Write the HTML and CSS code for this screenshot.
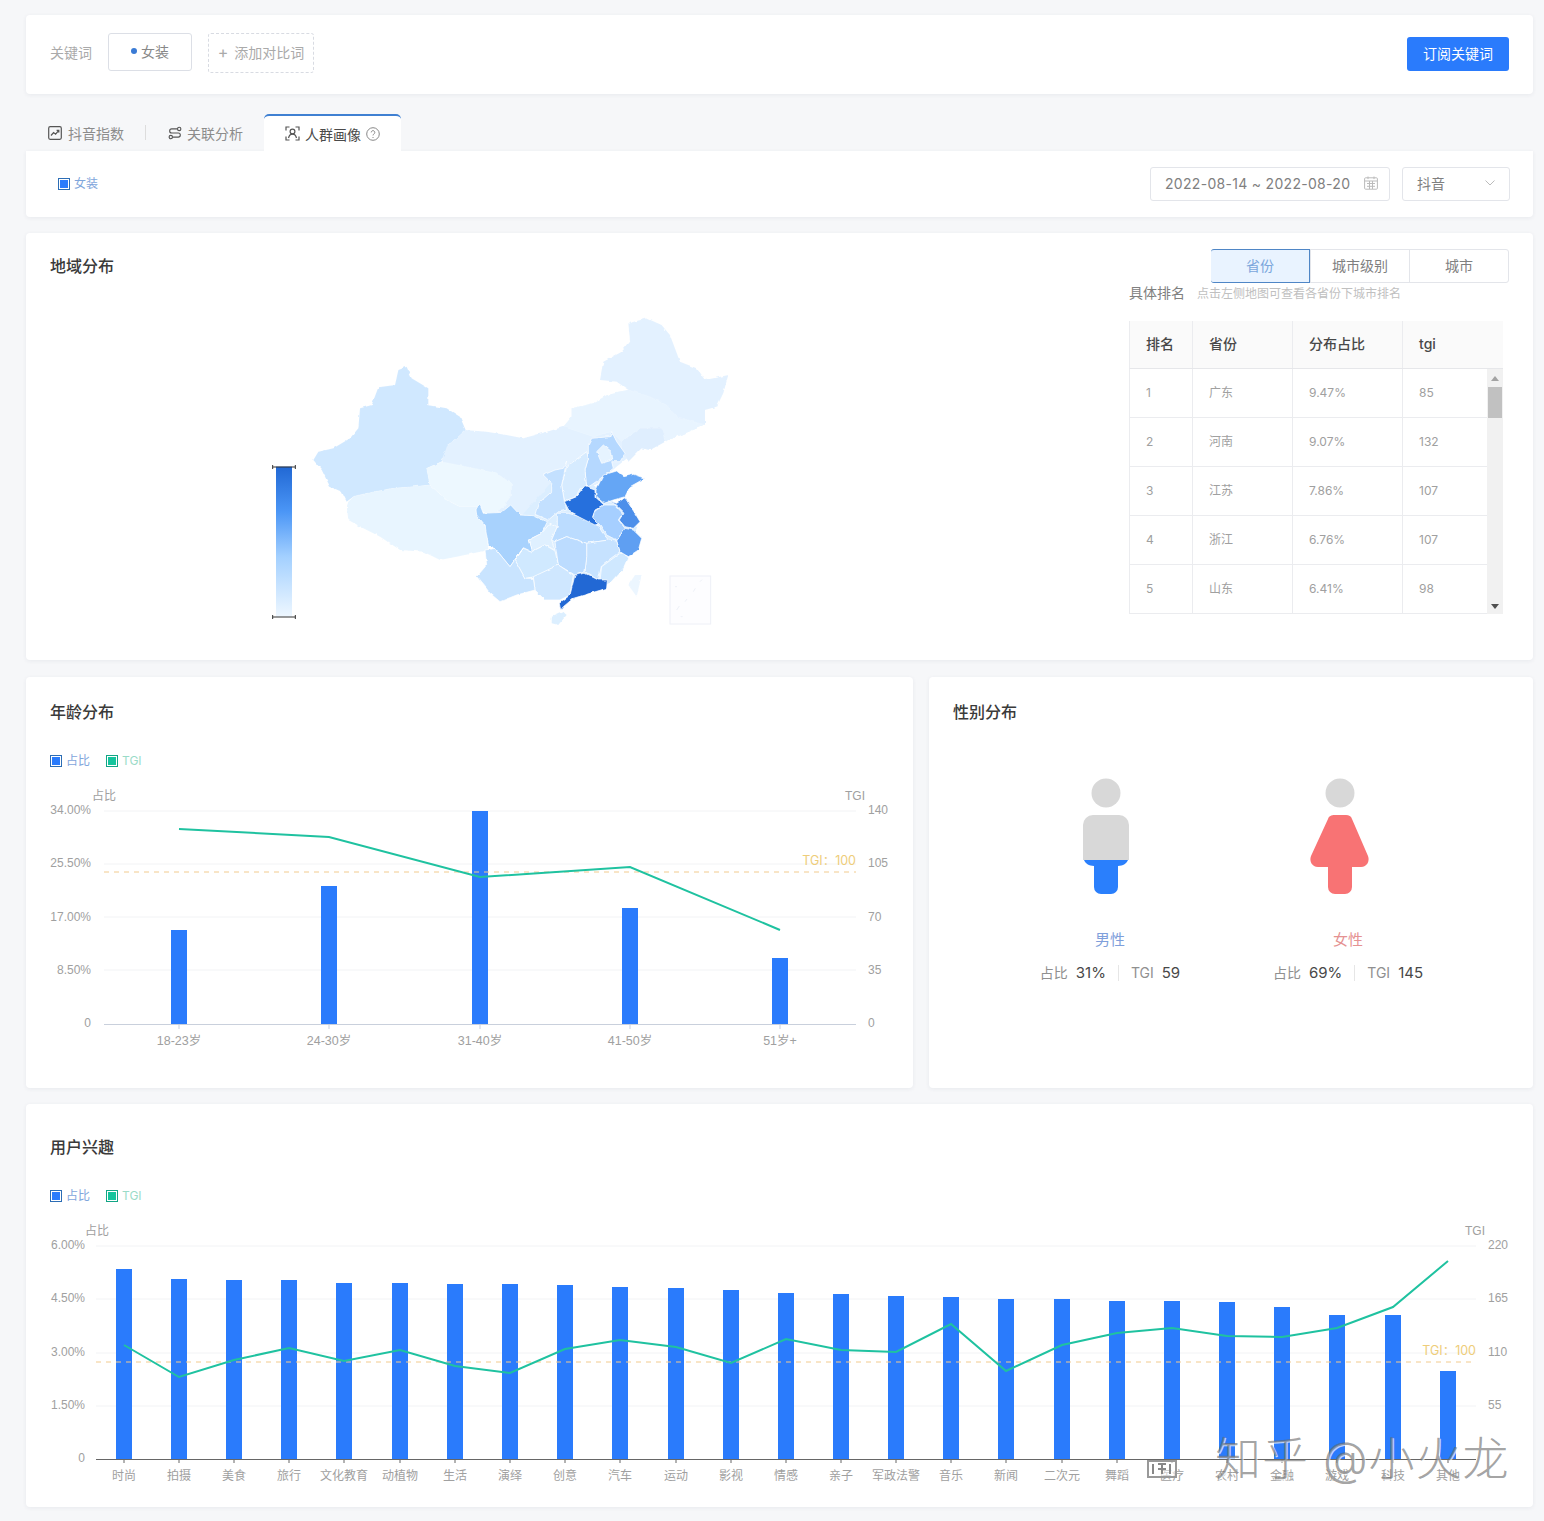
FILE: index.html
```html
<!DOCTYPE html>
<html lang="zh-CN">
<head>
  <meta charset="UTF-8">
  <title>人群画像</title>
  <link rel="stylesheet" href="styles.css">
</head>
<body>
  <!-- 关键词 -->
  <section class="card keyword-bar">
    <span class="keyword-label">关键词</span>
    <span class="keyword-chip"><i class="dot"></i>女装</span>
    <span class="keyword-add"><b>+</b>添加对比词</span>
    <button class="subscribe">订阅关键词</button>
  </section>

  <!-- 标签页 -->
  <nav class="tabs">
    <a class="tab tab-first">
      <svg width="14" height="14" viewBox="0 0 14 14" class="tab-icon"><rect x="0.7" y="0.7" width="12.6" height="12.6" rx="1.5"/><path d="M3 9.5l2.6-3 2 1.6L10.6 4.6M8.6 4.4h2.2v2.2"/></svg>
      抖音指数
    </a>
    <i class="tab-sep"></i>
    <a class="tab">
      <svg width="14" height="14" viewBox="0 0 15 14" class="tab-icon"><circle cx="12" cy="2.6" r="1.8"/><circle cx="3" cy="11.4" r="1.8"/><path d="M10.2 2.6H4a2.2 2.2 0 0 0 0 4.4h7a2.2 2.2 0 0 1 0 4.4H4.8"/></svg>
      关联分析
    </a>
    <a class="tab tab-active">
      <svg width="15" height="15" viewBox="0 0 15 15" class="tab-icon"><path d="M1 4.5V1h3.5M10.5 1H14v3.5M14 10.5V14h-3.5M4.500 14H1v-3.500"/><circle cx="7.500" cy="5.500" r="2.400"/><path d="M3.500 12c.6-2.500 2.200-3.800 4-3.800s3.400 1.300 4 3.800"/></svg>
      人群画像
      <svg width="14" height="14" viewBox="0 0 14 14" class="help"><circle cx="7" cy="7" r="6.300"/><path d="M5.200 5.400a1.800 1.800 0 1 1 2.700 1.600c-.6.400-.9.700-.9 1.400"/><path d="M7 10v1"/></svg>
    </a>
  </nav>

  <!-- 筛选 -->
  <section class="card filter-bar">
    <span class="legend-item legend-blue"><i class="legend-box"></i>女装</span>
    <span class="date-input">
      2022-08-14 ~ 2022-08-20
      <svg width="14" height="14" viewBox="0 0 14 14" class="input-icon"><rect x="0.600" y="1.800" width="12.800" height="11.400" rx="1"/><path d="M0.600 5h12.800M4 .5v2.600M10 .5v2.600M3 7.500h8M3 10.300h8M5.500 5v8M8.500 5v8"/></svg>
    </span>
    <span class="select-input">
      抖音
      <svg width="12" height="8" viewBox="0 0 12 8" class="input-icon"><path d="M1.500 1.500L6 6l4.500-4.500"/></svg>
    </span>
  </section>

  <!-- 地域分布 -->
  <section class="card region-card">
    <div class="region-left">
      <h2 class="card-title">地域分布</h2>
      <svg class="china-map" width="480" height="320" viewBox="0 0 1440 960">
        <defs>
          <linearGradient id="rangeFill" x1="0" y1="0" x2="0" y2="1">
            <stop offset="0" stop-color="#2168d4"/>
            <stop offset="0.3" stop-color="#4b96f6"/>
            <stop offset="0.6" stop-color="#a3d0ff"/>
            <stop offset="1" stop-color="#eef7ff"/>
          </linearGradient>
          <filter id="rough" filterUnits="userSpaceOnUse" x="100" y="0" width="1340" height="960">
            <feTurbulence type="fractalNoise" baseFrequency="0.05" numOctaves="2" seed="4"/>
            <feDisplacementMap in="SourceGraphic" scale="9" xChannelSelector="R" yChannelSelector="G"/>
          </filter>
        </defs>
        <rect x="48" y="470" width="48" height="450" fill="url(#rangeFill)"/>
        <path class="range-handle" d="M38 471H106M38 465v12M106 465v12M38 921H106M38 915v12M106 915v12"/>
        <g filter="url(#rough)">
          <!-- 西部、北部 -->
          <g class="pale" transform="translate(120 0)">
            <polygon fill="#e3f1ff" points="497,360 560,365 620,375 670,385 740,365 790,350 815,320 815,295 880,280 930,250 985,240 950,215 900,210 910,155 965,125 990,95 985,40 1040,25 1085,45 1110,75 1140,155 1190,175 1215,210 1285,195 1270,250 1250,290 1215,300 1215,345 1095,395 1050,420 1025,415 975,450 950,470 870,540 700,620 560,600 440,480 425,440 445,400 470,385"/>
            <polygon fill="#e8f4ff" points="815,295 880,280 930,250 985,240 1050,260 1100,285 1130,320 1215,345 1095,395 1085,355 1020,355 965,395 935,365 880,380 790,350 815,320"/>
            <polygon fill="#dfeefe" points="965,395 1020,355 1085,355 1095,395 1050,420 1025,415 985,455 965,420"/>
            <polygon fill="#d0e8ff" points="40,450 55,425 100,415 150,385 175,355 180,295 215,285 235,232 285,225 295,180 320,170 335,205 385,235 385,285 440,295 480,320 497,360 470,385 445,400 425,455 380,475 390,525 340,530 280,535 225,545 160,560 140,575 125,545 90,530 65,480"/>
          </g>
          <g class="pale">
            <polygon fill="#e8f5ff" points="260,590 265,575 280,560 345,545 400,535 460,530 510,525 560,570 600,590 650,590 680,660 685,720 640,730 590,740 540,750 490,725 420,720 360,680 310,655 265,630"/>
            <polygon fill="#edf8ff" points="500,475 545,455 620,470 710,490 755,520 755,555 730,590 690,620 650,590 600,590 560,570 510,525"/>
            <polygon fill="#ecf6ff" points="1125,795 1145,795 1130,860 1105,825"/>
            <polygon fill="#dcefff" points="875,920 910,905 920,915 895,945 875,940"/>
          </g>
          <!-- 中部、东部 -->
          <g class="province" transform="translate(630 345)">
            <polygon class="map-fill" points="130,300 290,120 400,200 500,300 470,400 400,480 300,510 190,455 100,420"/>
            <polygon fill="#b5d8ff" points="355,60 365,40 420,35 425,20 440,50 465,85 450,110 425,110 430,130 385,165 350,190 345,135 355,100"/>
            <polygon fill="#e6f3ff" points="380,80 400,60 425,80 428,105 395,115"/>
            <polygon fill="#d6ebff" points="290,125 350,80 355,100 345,135 350,190 330,190 320,215 283,228 275,180"/>
            <polygon fill="#c3e0ff" points="290,108 280,130 255,135 220,150 245,175 245,200 205,235 195,268 235,285 262,262 290,255 283,228 275,180"/>
            <polygon fill="#a8d2fd" points="18,250 30,240 40,265 95,262 122,240 150,270 190,272 232,290 215,325 175,345 185,380 160,368 120,425 75,370 55,360 45,300 20,270"/>
            <polygon fill="#dff0ff" points="175,345 215,325 240,295 262,305 245,345 255,375 225,360 185,380"/>
            <polygon fill="#bbdcff" points="245,345 262,305 262,265 295,265 330,275 385,300 395,320 415,345 350,355 290,335 255,350"/>
            <polygon fill="#2770dd" points="283,230 320,215 345,185 375,195 375,215 402,240 375,255 368,275 390,292 375,300 345,285 300,262"/>
            <polygon fill="#65a6f5" points="378,195 400,150 440,138 462,155 490,148 525,160 480,185 465,215 430,225 402,235 378,215"/>
            <polygon fill="#4d8fea" points="415,228 440,235 465,218 495,265 510,290 490,310 465,305 448,285 462,262 440,240"/>
            <polygon fill="#a6cfff" points="375,258 402,240 435,240 458,265 445,285 465,310 440,345 410,330 390,300 368,278"/>
            <polygon fill="#5e9ff2" points="465,310 490,315 515,340 505,375 475,395 450,380 440,348"/>
            <polygon fill="#c6e2ff" points="350,355 415,345 440,348 450,380 395,420 385,465 345,440 350,395"/>
            <polygon fill="#cfe8ff" points="395,425 450,385 475,395 460,430 415,480 390,465"/>
            <polygon fill="#bcdcff" points="255,350 290,335 350,355 350,395 345,440 315,450 265,420"/>
            <polygon fill="#d0e9ff" points="135,405 160,370 185,380 225,360 255,378 265,420 195,455 165,460"/>
            <polygon fill="#cfe7ff" points="190,455 265,420 310,450 300,510 270,525 225,525 195,495"/>
            <polygon fill="#c9e4ff" points="20,455 50,420 45,375 75,370 120,425 160,370 135,405 165,460 190,460 195,495 140,510 90,530 60,505 45,485"/>
            <polygon fill="#2168d4" points="315,450 345,445 385,465 412,465 410,490 360,505 310,520 280,545 272,555 268,535 300,510"/>
          </g>
        </g>
        <rect class="island-box" x="1230" y="798" width="122" height="144"/>
        <path class="island-dots" d="M1250 900l8-12M1275 875l6-8M1300 845l6-10M1320 815l6-6M1245 830h6M1262 920h6"/>
      </svg>
    </div>
    <div class="region-right">
      <div class="segment">
        <span class="segment-item segment-active">省份</span>
        <span class="segment-item">城市级别</span>
        <span class="segment-item">城市</span>
      </div>
      <div class="rank-title">具体排名<small>点击左侧地图可查看各省份下城市排名</small></div>
      <div class="rank-table">
        <div class="rank-row rank-head"><span>排名</span><span>省份</span><span>分布占比</span><span>tgi</span></div>
        <div class="rank-scroll">
          <div class="rank-rows">
            <div class="rank-row"><span>1</span><span>广东</span><span>9.47%</span><span>85</span></div>
            <div class="rank-row"><span>2</span><span>河南</span><span>9.07%</span><span>132</span></div>
            <div class="rank-row"><span>3</span><span>江苏</span><span>7.86%</span><span>107</span></div>
            <div class="rank-row"><span>4</span><span>浙江</span><span>6.76%</span><span>107</span></div>
            <div class="rank-row"><span>5</span><span>山东</span><span>6.41%</span><span>98</span></div>
          </div>
          <div class="scrollbar">
            <i class="arrow-up"></i>
            <i class="thumb"></i>
            <i class="arrow-down"></i>
          </div>
        </div>
      </div>
    </div>
  </section>

  <div class="chart-row">
    <!-- 年龄分布 -->
    <section class="card age-card">
      <h2 class="card-title">年龄分布</h2>
      <div class="legend">
        <span class="legend-item legend-blue"><i class="legend-box"></i>占比</span>
        <span class="legend-item legend-green"><i class="legend-box"></i>TGI</span>
      </div>
      <svg class="chart" width="887" height="290" viewBox="26 780 887 290">
        <g class="grid">
          <path d="M104 811H856M104 864H856M104 917H856M104 970H856"/>
        </g>
        <path class="axis-light" d="M104 1024.500H856M179 1024v5M329 1024v5M480 1024v5M630 1024v5M780 1024v5"/>
        <text class="tick" x="92" y="800">占比</text>
        <text class="tick end" x="865" y="800">TGI</text>
        <text class="tick end" x="91" y="814">34.00%</text>
        <text class="tick end" x="91" y="867">25.50%</text>
        <text class="tick end" x="91" y="921">17.00%</text>
        <text class="tick end" x="91" y="974">8.50%</text>
        <text class="tick end" x="91" y="1027">0</text>
        <text class="tick" x="868" y="814">140</text>
        <text class="tick" x="868" y="867">105</text>
        <text class="tick" x="868" y="921">70</text>
        <text class="tick" x="868" y="974">35</text>
        <text class="tick" x="868" y="1027">0</text>
        <g class="bars">
          <rect x="171" y="930" width="16" height="94"/>
          <rect x="321" y="886" width="16" height="138"/>
          <rect x="472" y="811" width="16" height="213"/>
          <rect x="622" y="908" width="16" height="116"/>
          <rect x="772" y="958" width="16" height="66"/>
        </g>
        <path class="tgi-dash" d="M104 872H856"/>
        <text class="tgi-label" x="856" y="865">TGI：100</text>
        <polyline class="tgi-line" points="179,829 329,837 480,877 630,867 780,930"/>
        <g class="tick tick-wide middle">
          <text x="179" y="1045">18-23岁</text>
          <text x="329" y="1045">24-30岁</text>
          <text x="480" y="1045">31-40岁</text>
          <text x="630" y="1045">41-50岁</text>
          <text x="780" y="1045">51岁+</text>
        </g>
      </svg>
    </section>

    <!-- 性别分布 -->
    <section class="card gender-card">
      <h2 class="card-title">性别分布</h2>
      <div class="gender-cols">
        <div class="gender-col">
          <svg width="72" height="125" viewBox="1074 775 72 125">
            <circle cx="1106" cy="793" r="14.500" fill="#d8d8d8"/>
            <path fill="#d8d8d8" d="M1083 825a10 10 0 0 1 10-10h26a10 10 0 0 1 10 10v35h-46z"/>
            <path fill="#2a7ffc" d="M1084 860h44c-1 3-5 6-10 6v21a7 7 0 0 1-7 7h-10a7 7 0 0 1-7-7v-21c-5 0-9-3-10-6z"/>
          </svg>
          <div class="gender-name name-male">男性</div>
          <div class="gender-stats"><span>占比</span><b>31%</b><i></i><span>TGI</span><b>59</b></div>
        </div>
        <div class="gender-col">
          <svg width="96" height="125" viewBox="1300 775 96 125">
            <circle cx="1340" cy="793" r="14.500" fill="#d8d8d8"/>
            <path fill="#f87374" d="M1335 815h11c3 0 5 1 6 4l16 37c2 5-1 11-7 11h-9v20a7 7 0 0 1-7 7h-10a7 7 0 0 1-7-7v-20h-10c-6 0-9-6-7-11l17-37c1-3 3-4 7-4z"/>
          </svg>
          <div class="gender-name name-female">女性</div>
          <div class="gender-stats"><span>占比</span><b>69%</b><i></i><span>TGI</span><b>145</b></div>
        </div>
      </div>
    </section>
  </div>

  <!-- 用户兴趣 -->
  <section class="card interest-card">
    <h2 class="card-title">用户兴趣</h2>
    <div class="legend">
      <span class="legend-item legend-blue"><i class="legend-box"></i>占比</span>
      <span class="legend-item legend-green"><i class="legend-box"></i>TGI</span>
    </div>
    <svg class="chart" width="1507" height="292" viewBox="26 1215 1507 292">
      <g class="grid">
        <path d="M96 1246H1476M96 1299H1476M96 1353H1476M96 1406H1476"/>
      </g>
      <text class="tick" x="85" y="1235">占比</text>
      <text class="tick end" x="1485" y="1235">TGI</text>
      <text class="tick end" x="85" y="1249">6.00%</text>
      <text class="tick end" x="85" y="1302">4.50%</text>
      <text class="tick end" x="85" y="1356">3.00%</text>
      <text class="tick end" x="85" y="1409">1.50%</text>
      <text class="tick end" x="85" y="1462">0</text>
      <text class="tick" x="1488" y="1249">220</text>
      <text class="tick" x="1488" y="1302">165</text>
      <text class="tick" x="1488" y="1356">110</text>
      <text class="tick" x="1488" y="1409">55</text>
      <g class="bars">
        <rect x="116" y="1269" width="16" height="190"/>
        <rect x="171" y="1279" width="16" height="180"/>
        <rect x="226" y="1280" width="16" height="179"/>
        <rect x="281" y="1280" width="16" height="179"/>
        <rect x="336" y="1283" width="16" height="176"/>
        <rect x="392" y="1283" width="16" height="176"/>
        <rect x="447" y="1284" width="16" height="175"/>
        <rect x="502" y="1284" width="16" height="175"/>
        <rect x="557" y="1285" width="16" height="174"/>
        <rect x="612" y="1287" width="16" height="172"/>
        <rect x="668" y="1288" width="16" height="171"/>
        <rect x="723" y="1290" width="16" height="169"/>
        <rect x="778" y="1293" width="16" height="166"/>
        <rect x="833" y="1294" width="16" height="165"/>
        <rect x="888" y="1296" width="16" height="163"/>
        <rect x="943" y="1297" width="16" height="162"/>
        <rect x="998" y="1299" width="16" height="160"/>
        <rect x="1054" y="1299" width="16" height="160"/>
        <rect x="1109" y="1301" width="16" height="158"/>
        <rect x="1164" y="1301" width="16" height="158"/>
        <rect x="1219" y="1302" width="16" height="157"/>
        <rect x="1274" y="1307" width="16" height="152"/>
        <rect x="1329" y="1315" width="16" height="144"/>
        <rect x="1385" y="1315" width="16" height="144"/>
        <rect x="1440" y="1371" width="16" height="88"/>
      </g>
      <path class="axis-dark" d="M96 1459.500H1476M124 1459v4M179 1459v4M234 1459v4M289 1459v4M344 1459v4M400 1459v4M455 1459v4M510 1459v4M565 1459v4M620 1459v4M676 1459v4M731 1459v4M786 1459v4M841 1459v4M896 1459v4M951 1459v4M1006 1459v4M1062 1459v4M1117 1459v4M1172 1459v4M1227 1459v4M1282 1459v4M1337 1459v4M1393 1459v4M1448 1459v4"/>
      <path class="tgi-dash" d="M96 1362H1476"/>
      <text class="tgi-label" x="1476" y="1355">TGI：100</text>
      <polyline class="tgi-line" points="124,1345 179,1377 234,1360 289,1348 344,1361 400,1350 455,1366 510,1373 565,1349 620,1340 676,1347 731,1363 786,1339 841,1350 896,1352 951,1324 1006,1371 1062,1345 1117,1333 1172,1328 1227,1336 1282,1337 1337,1328 1393,1307 1448,1261"/>
      <g class="tick middle">
        <text x="124" y="1480">时尚</text>
        <text x="179" y="1480">拍摄</text>
        <text x="234" y="1480">美食</text>
        <text x="289" y="1480">旅行</text>
        <text x="344" y="1480">文化教育</text>
        <text x="400" y="1480">动植物</text>
        <text x="455" y="1480">生活</text>
        <text x="510" y="1480">演绎</text>
        <text x="565" y="1480">创意</text>
        <text x="620" y="1480">汽车</text>
        <text x="676" y="1480">运动</text>
        <text x="731" y="1480">影视</text>
        <text x="786" y="1480">情感</text>
        <text x="841" y="1480">亲子</text>
        <text x="896" y="1480">军政法警</text>
        <text x="951" y="1480">音乐</text>
        <text x="1006" y="1480">新闻</text>
        <text x="1062" y="1480">二次元</text>
        <text x="1117" y="1480">舞蹈</text>
        <text x="1172" y="1480">医疗</text>
        <text x="1227" y="1480">农村</text>
        <text x="1282" y="1480">金融</text>
        <text x="1337" y="1480">游戏</text>
        <text x="1393" y="1480">科技</text>
        <text x="1448" y="1480">其他</text>
      </g>
    </svg>
    <!-- 水印 -->
    <svg class="wm-badge" width="30" height="18" viewBox="0 0 30 18"><rect x="1" y="1" width="28" height="16" fill="#fff" fill-opacity="0.5" stroke="#999" stroke-width="2"/><path d="M6 4v10M11 4h8M11 9h8M15 4v10M23 4v10" stroke="#888" stroke-width="2" fill="none"/></svg>
    <span class="watermark">知乎 @小火龙</span>
  </section>
</body>
</html>
```

FILE: styles.css
```css
/* 全局 */
body {
  margin: 0;
  padding: 15px 11px 14px 26px;
  background-color: #f6f7f9;
  font-family: Inter, "Noto Sans CJK SC", sans-serif;
  font-size: 14px;
  color: #666;
}
i {
  font-style: normal;
}
.card {
  background-color: #fff;
  border-radius: 4px;
  box-shadow: 0 1px 4px rgba(40, 60, 90, 0.07);
  box-sizing: border-box;
}
.card-title {
  margin: 0;
  font-size: 16px;
  line-height: 22px;
  font-weight: 500;
  color: #3a3a3a;
}

/* 关键词 */
.keyword-bar {
  display: flex;
  align-items: flex-start;
  height: 79px;
  padding: 18px 24px 0;
}
.keyword-label {
  width: 58px;
  line-height: 40px;
  color: #aaa;
}
.keyword-chip {
  display: flex;
  align-items: center;
  justify-content: center;
  width: 84px;
  height: 38px;
  padding-bottom: 2px;
  box-sizing: border-box;
  border: 1px solid #dcdfe6;
  border-radius: 3px;
  color: #888;
}
.dot {
  width: 6px;
  height: 6px;
  margin-right: 4px;
  border-radius: 50%;
  background-color: #3a7bd5;
}
.keyword-add {
  display: flex;
  align-items: center;
  justify-content: center;
  width: 106px;
  height: 40px;
  margin-left: 16px;
  padding-bottom: 2px;
  box-sizing: border-box;
  border: 1px dashed #d8dbe2;
  border-radius: 3px;
  color: #aaa;
}
.keyword-add b {
  margin-right: 6px;
  font-weight: 400;
  font-size: 16px;
}
.subscribe {
  width: 102px;
  height: 34px;
  margin: 4px 0 0 auto;
  padding: 0 0 2px;
  border: 0;
  border-radius: 3px;
  background-color: #2a7bfc;
  color: #fff;
  font-family: inherit;
  font-size: 14px;
}

/* 标签页 */
.tabs {
  display: flex;
  align-items: center;
  height: 37px;
  margin-top: 20px;
  padding-left: 22px;
}
.tab {
  display: flex;
  align-items: center;
  gap: 5px;
  color: #8c8c8c;
}
.tab-first {
  gap: 6px;
}
.tab-icon {
  fill: none;
  stroke: #555;
  stroke-width: 1.2;
}
.tab-sep {
  width: 1px;
  height: 15px;
  margin: 0 22px 0 21px;
  background-color: #ddd;
}
.tab-active {
  box-sizing: border-box;
  width: 137px;
  height: 37px;
  margin-left: 21px;
  padding-left: 21px;
  border-top: 2px solid #3f80d2;
  border-radius: 5px 5px 0 0;
  background-color: #fff;
  color: #4a4a4a;
}
.help {
  fill: none;
  stroke: #888;
  stroke-width: 1;
}

/* 筛选 */
.filter-bar {
  display: flex;
  align-items: center;
  height: 66px;
  padding: 0 23px 0 32px;
  border-radius: 0 0 4px 4px;
}
.legend-item {
  display: inline-flex;
  align-items: center;
  gap: 4px;
  font-size: 12px;
  line-height: 16px;
}
.legend-box {
  width: 12px;
  height: 12px;
  box-sizing: border-box;
  padding: 1px;
  border: 1px solid;
  background-clip: content-box;
}
.legend-blue {
  color: #7fa6dc;
}
.legend-blue .legend-box {
  border-color: #2c6db5;
  background-color: #2a7bfc;
}
.legend-green {
  color: #9adbc8;
}
.legend-green .legend-box {
  border-color: #12a585;
  background-color: #14c49c;
}
.date-input,
.select-input {
  display: flex;
  align-items: center;
  justify-content: space-between;
  height: 34px;
  padding-bottom: 2px;
  box-sizing: border-box;
  border: 1px solid #e3e5ea;
  border-radius: 3px;
  color: #808080;
}
.date-input {
  width: 240px;
  margin-left: auto;
  padding-left: 14px;
  padding-right: 11px;
  letter-spacing: 0.3px;
  white-space: nowrap;
}
.select-input {
  width: 108px;
  margin-left: 12px;
  padding-left: 14px;
  padding-right: 13px;
}
.input-icon {
  fill: none;
  stroke: #bbb;
  stroke-width: 1;
}

/* 地域分布 */
.region-card {
  display: flex;
  justify-content: space-between;
  height: 427px;
  margin-top: 16px;
  padding: 16px 24px 0;
}
.region-left .card-title {
  margin-top: 6px;
}
.china-map {
  display: block;
  margin: 33px 0 0 210px;
}
.map-fill {
  fill: #dbeeff;
}
.pale polygon {
  stroke: #fff;
  stroke-width: 1;
  stroke-opacity: 0.4;
  stroke-linejoin: round;
}
.province polygon {
  stroke: #fff;
  stroke-width: 2.500;
  stroke-opacity: 0.85;
  stroke-linejoin: round;
}
.province .map-fill {
  stroke-width: 0;
}
.range-handle {
  fill: none;
  stroke: #333;
  stroke-width: 3;
}
.island-box {
  fill: #fdfdff;
  stroke: #eef0f7;
  stroke-width: 3;
}
.island-dots {
  fill: none;
  stroke: #eef1f8;
  stroke-width: 3;
}
.region-right {
  width: 380px;
}
.segment {
  display: flex;
  width: 298px;
  height: 34px;
  margin-left: auto;
  box-sizing: border-box;
  border: 1px solid #e3e5ea;
  border-radius: 3px;
}
.segment-item {
  flex: 1;
  line-height: 31px;
  text-align: center;
  color: #808080;
  border-left: 1px solid #e3e5ea;
}
.segment-item:first-child {
  border-left: 0;
}
.segment-active {
  margin: -1px 0 -1px -1px;
  line-height: 32px;
  border: 1px solid #4f86c6;
  border-radius: 3px 0 0 3px;
  background-color: #e9f3ff;
  color: #7ba6dc;
}
.rank-title {
  line-height: 20px;
  font-size: 14px;
  color: #808080;
}
.rank-title small {
  margin-left: 12px;
  font-size: 12px;
  color: #c0c0c0;
}
.rank-table {
  width: 374px;
  margin-top: 17px;
}
.rank-row {
  display: grid;
  grid-template-columns: 63px 100px 110px 1fr;
  height: 49px;
  box-sizing: border-box;
  border-bottom: 1px solid #ebecef;
  border-left: 1px solid #ebecef;
  font-size: 12px;
  color: #a0a0a0;
}
.rank-row span {
  padding-left: 16px;
  line-height: 48px;
  border-right: 1px solid #ebecef;
}
.rank-row span:last-child {
  border-right: 0;
}
.rank-head {
  height: 48px;
  border-bottom-color: #e6e7ea;
  background-color: #fafafa;
  font-size: 14px;
  font-weight: 500;
  color: #484848;
}
.rank-head span {
  line-height: 45px;
}
.rank-scroll {
  display: flex;
}
.rank-rows {
  flex: 1;
}
.scrollbar {
  display: flex;
  flex-direction: column;
  width: 16px;
  background-color: #f1f1f1;
}
.thumb {
  height: 31px;
  margin: 6px 1px 0;
  background-color: #c1c1c1;
}
.arrow-up,
.arrow-down {
  width: 0;
  height: 0;
  margin: 7px auto 0;
  border-left: 4px solid transparent;
  border-right: 4px solid transparent;
}
.arrow-up {
  border-bottom: 5px solid #a3a3a3;
}
.arrow-down {
  margin: auto auto 5px;
  border-top: 5px solid #505050;
}

/* 图表 */
.chart-row {
  display: grid;
  grid-template-columns: 887px 604px;
  gap: 16px;
  margin-top: 17px;
}
.age-card,
.gender-card {
  height: 411px;
  padding-top: 24px;
}
.card > .card-title {
  padding-left: 24px;
}
.legend {
  display: flex;
  gap: 16px;
  margin: 30px 0 11px 24px;
}
.chart {
  display: block;
}
.grid path {
  fill: none;
  stroke: #f2f3f5;
}
.axis-light {
  fill: none;
  stroke: #c9d0dc;
}
.axis-dark {
  fill: none;
  stroke: #666;
}
.bars rect {
  fill: #2a7bfc;
}
.tick {
  font-family: "Liberation Sans", "Noto Sans CJK SC", sans-serif;
  font-size: 12px;
  fill: #a0a0a0;
}
.tick-wide {
  font-size: 12.500px;
}
.end {
  text-anchor: end;
}
.middle {
  text-anchor: middle;
}
.tgi-dash {
  fill: none;
  stroke: #f2cb8e;
  stroke-dasharray: 5 5;
}
.tgi-label {
  font-size: 12.500px;
  text-anchor: end;
  fill: #eecd7a;
}
.tgi-line {
  fill: none;
  stroke: #1fc2a0;
  stroke-width: 2;
}

/* 性别分布 */
.gender-cols {
  display: flex;
  justify-content: center;
  margin-top: 52px;
  padding-right: 4px;
}
.gender-col {
  display: flex;
  flex-direction: column;
  align-items: center;
  width: 238px;
}
.gender-name {
  margin-top: 29px;
  font-size: 15px;
  line-height: 22px;
}
.name-male {
  color: #7f9fdb;
}
.name-female {
  color: #e59292;
}
.gender-stats {
  display: flex;
  align-items: center;
  gap: 8px;
  margin-top: 11px;
  line-height: 22px;
  white-space: nowrap;
}
.gender-stats span {
  color: #909090;
}
.gender-stats b {
  font-size: 15px;
  font-weight: 400;
  color: #484848;
}
.gender-stats i {
  width: 1px;
  height: 16px;
  margin: 0 4px;
  background-color: #e6e6e6;
}

/* 用户兴趣 */
.interest-card {
  position: relative;
  height: 403px;
  margin-top: 16px;
  padding-top: 32px;
}
.watermark {
  position: absolute;
  left: 1189px;
  top: 325px;
  font-size: 46px;
  line-height: 58px;
  font-weight: 300;
  letter-spacing: 1px;
  white-space: nowrap;
  color: rgba(105, 105, 105, 0.62);
  text-shadow: 1px 1px 0 rgba(255, 255, 255, 0.7);
}
.wm-badge {
  position: absolute;
  left: 1121px;
  top: 356px;
}
```
